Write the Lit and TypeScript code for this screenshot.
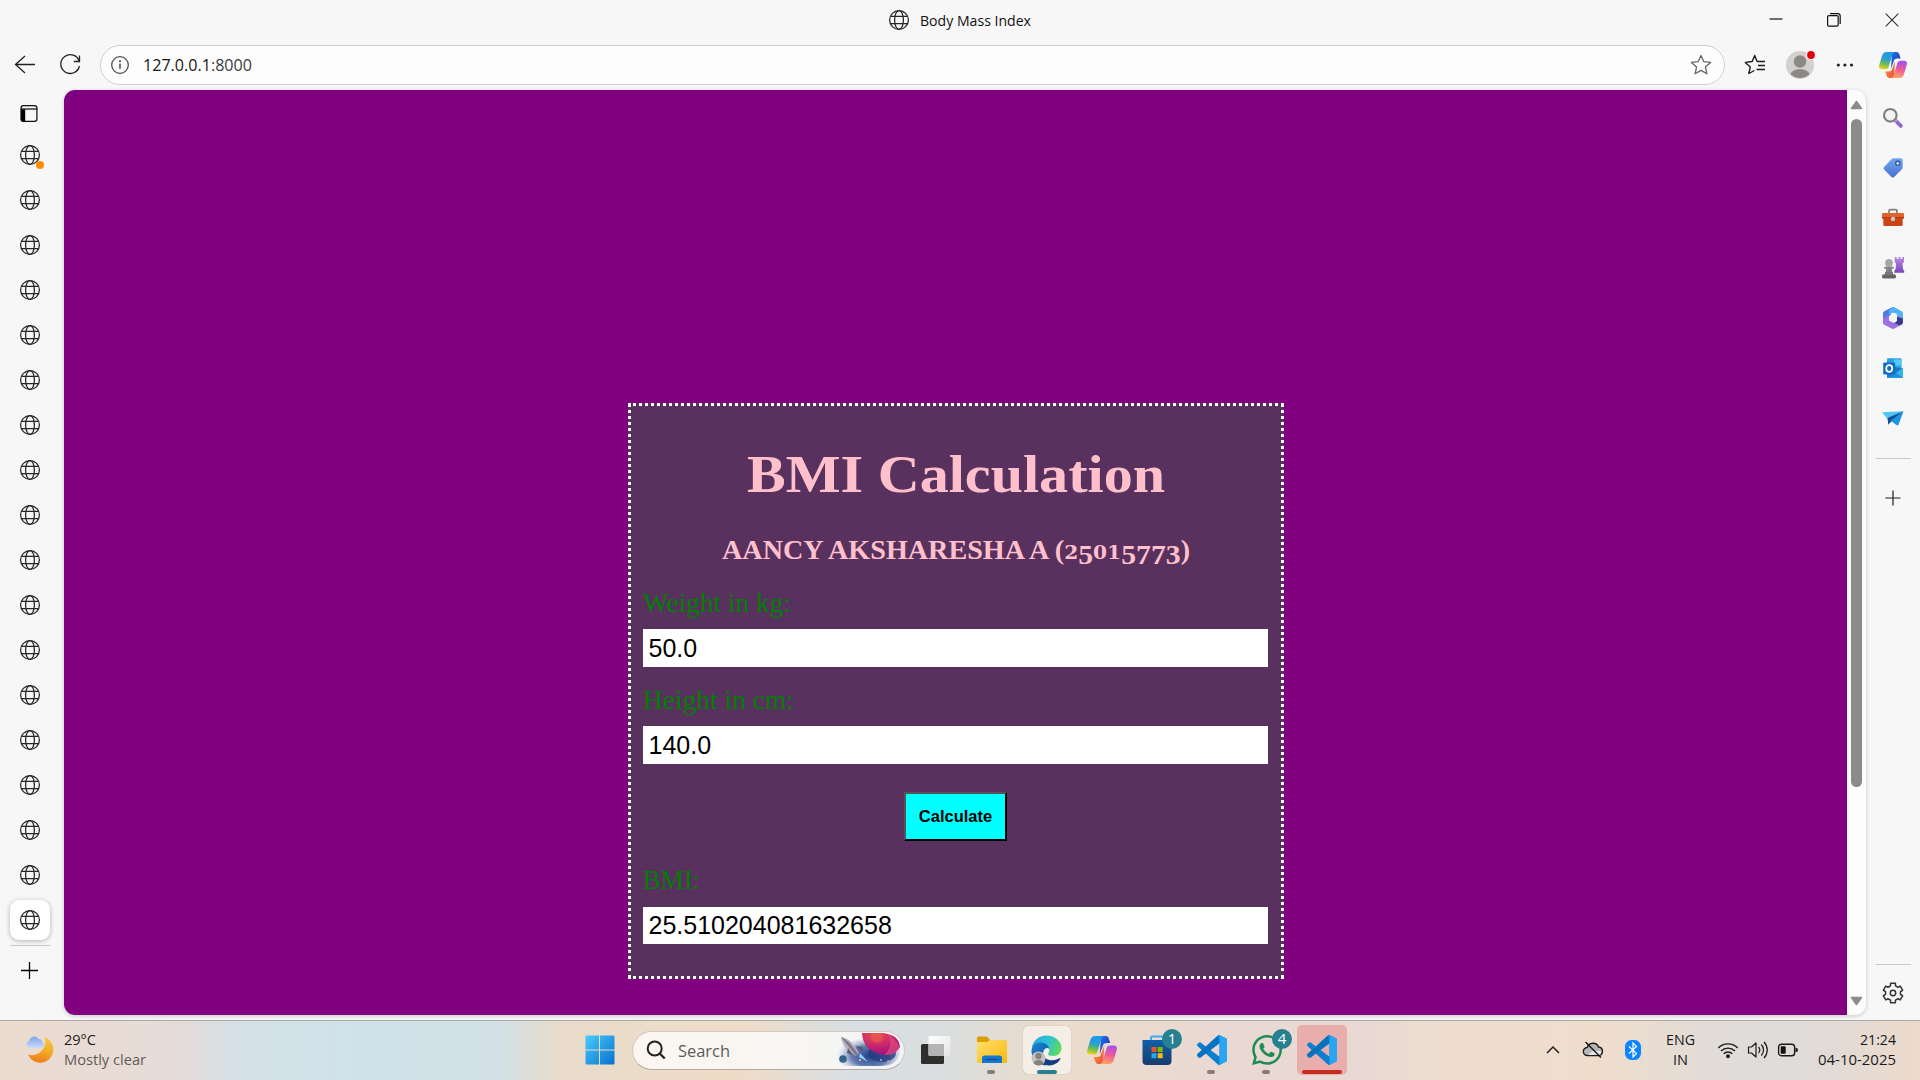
import { LitElement, html, css } from "lit";
import { customElement, property, query } from "lit/decorators.js";

/* Single line of text stretched or squeezed to an exact advance width. */
@customElement("fit-text")
class FitText extends LitElement {
  static styles = css`
    :host { display: inline-block; white-space: pre; flex: none; text-align: left; }
    .inner { display: inline-block; transform-origin: 0 50%; white-space: pre; }
  `;
  @property({ type: Number }) w = 0;
  @query(".inner") inner!: HTMLElement;
  firstUpdated() {
    const natural = this.inner.getBoundingClientRect().width;
    this.style.width = this.w + "px";
    if (natural) this.inner.style.transform = `scaleX(${this.w / natural})`;
  }
  render() {
    return html`<span class="inner"><slot></slot></span>`;
  }
}

const globe = html`<svg class="globe" width="22" height="22" viewBox="0 0 22 22" fill="none" stroke="#262626" stroke-width="1.25">
  <circle cx="11" cy="11" r="9.4"/><ellipse cx="11" cy="11" rx="4.4" ry="9.4"/>
  <path d="M2.4 7.4H19.6M2.4 14.7H19.6"/></svg>`;

const copilot = (w: number, h: number) => html`<svg width=${w} height=${h} viewBox="0 0 28 26">
  <defs>
    <linearGradient id="cpA" x1="0.5" y1="0" x2="0.3" y2="1"><stop offset="0" stop-color="#1a9af0"/><stop offset=".4" stop-color="#2a9fd0"/><stop offset=".7" stop-color="#6cbf55"/><stop offset="1" stop-color="#f5cf1c"/></linearGradient>
    <linearGradient id="cpB" x1="0.6" y1="0" x2="0.4" y2="1"><stop offset="0" stop-color="#a54ff0"/><stop offset=".5" stop-color="#ee5b9c"/><stop offset="1" stop-color="#ffa35a"/></linearGradient>
    <linearGradient id="cpC" x1="0" y1="0" x2="1" y2="1"><stop offset="0" stop-color="#2b6de8"/><stop offset="1" stop-color="#1238a8"/></linearGradient>
    <linearGradient id="cpD" x1="0" y1="0" x2="1" y2="1"><stop offset="0" stop-color="#f6b430"/><stop offset="1" stop-color="#ee3f45"/></linearGradient>
  </defs>
  <path fill="url(#cpC)" d="M13 0h4.6c1.5 0 2.3.9 2.8 2.4l1.3 4.1h-3.4c-2 0-3 .9-3.6 2.7L12 17z"/>
  <path fill="url(#cpD)" d="M15 26h-4.6c-1.5 0-2.3-.9-2.8-2.4l-1.3-4.1h3.4c2 0 3-.9 3.6-2.7L16 9z"/>
  <path fill="url(#cpA)" d="M7.6 0h8.6c-1.7.2-2.4 1.400-2.900 3.100L9.600 15c-.500 1.600-1.700 2.300-3.300 2.300H3c-2.300 0-3.500-1.600-2.800-4L3 4C3.800 1.300 5.200 0 7.600 0z"/>
  <path fill="url(#cpB)" d="M20.4 26h-8.600c1.700-.2 2.400-1.400 2.900-3.100L18.400 11c.500-1.600 1.700-2.300 3.300-2.300H25c2.300 0 3.500 1.600 2.800 4L25 22c-.8 2.700-2.200 4-4.600 4z"/>
</svg>`;

const vscode = html`<svg width="30" height="30" viewBox="0 0 24 24">
  <path fill="#0a7fd0" d="M23.15 2.587L18.21.21a1.494 1.494 0 0 0-1.705.29l-9.46 8.63-4.12-3.128a.999.999 0 0 0-1.276.057L.327 7.261A1 1 0 0 0 .326 8.74L3.899 12 .326 15.26a1 1 0 0 0 .001 1.479L1.65 17.94a.999.999 0 0 0 1.276.057l4.12-3.128 9.46 8.63a1.492 1.492 0 0 0 1.704.29l4.942-2.377A1.5 1.5 0 0 0 24 20.06V3.939a1.5 1.5 0 0 0-.85-1.352zm-5.146 14.861L10.826 12l7.178-5.448v10.896z"/>
  <path fill="#0667ae" d="M1.65 17.94a1 1 0 0 1-1.32-1.2 1 1 0 0 1 0-1.480L16.500.5 18 6.550 2.930 18z" opacity=".55"/>
  <path fill="#28a5f3" d="M18 .13l5.150 2.457A1.500 1.500 0 0 1 24 3.940v16.120a1.500 1.500 0 0 1-.85 1.350L18 23.870z"/>
</svg>`;

const gearPath = (() => {
  const pts: string[] = [];
  for (let i = 0; i < 6; i++) {
    const base = (i * 60 - 90) * (Math.PI / 180);
    for (const [off, r] of [[-14, 10], [14, 10], [19, 7.6], [41, 7.6]] as const) {
      const a = base + (off * Math.PI) / 180;
      pts.push(`${(11 + r * Math.cos(a)).toFixed(2)} ${(11 + r * Math.sin(a)).toFixed(2)}`);
    }
  }
  return "M" + pts.join("L") + "Z";
})();

const railIcons = [
  /* search */
  html`<svg width="22" height="22" viewBox="0 0 22 22"><path d="M13.500 13.500l5.300 5.300" stroke="#9263d0" stroke-width="3.800" stroke-linecap="round"/><path d="M12.500 12.500l2 2" stroke="#b9a3da" stroke-width="2.500"/><circle cx="8.300" cy="8.300" r="6.300" fill="#f2f3f5" stroke="#7f7f7f" stroke-width="2.100"/></svg>`,
  /* tag */
  html`<svg width="22" height="22" viewBox="0 0 22 22"><defs><linearGradient id="tg" x1="0" y1="0" x2="0" y2="1"><stop offset="0" stop-color="#73a9ee"/><stop offset="1" stop-color="#466fd2"/></linearGradient></defs><path fill="url(#tg)" d="M11 1.300h8q1.700 0 1.700 1.700v7.500q0 .8-.6 1.400l-8 8q-1.300 1.200-2.600 0l-7.400-7.400q-1.200-1.300 0-2.600l7.500-8q.6-.6 1.400-.6z"/><circle cx="15.800" cy="6.200" r="2.100" fill="#cfe0fa" stroke="#24458f" stroke-width="1.100"/></svg>`,
  /* toolbox */
  html`<svg width="24" height="22" viewBox="0 0 24 22"><path d="M8 7V4q0-1.300 1.300-1.300h5.400Q16 2.700 16 4v3" fill="none" stroke="#7d7f80" stroke-width="1.700"/><path d="M2.300 9h19.400v8.500q0 1.600-1.600 1.600H3.900q-1.600 0-1.600-1.600z" fill="#cc4415"/><rect x="1" y="6" width="22" height="5.500" rx="1.200" fill="#e2622b"/><rect x="1" y="10" width="22" height="1.500" fill="#b63a10"/><circle cx="12" cy="12" r="2.200" fill="#c9c9c9"/></svg>`,
  /* games */
  html`<svg width="24" height="24" viewBox="0 0 24 24"><defs><linearGradient id="rk" x1="0" y1="0" x2="0" y2="1"><stop offset="0" stop-color="#b98be6"/><stop offset="1" stop-color="#7448bd"/></linearGradient></defs><path fill="url(#rk)" d="M13.700 1h2v2h1.700V1h2.200v2h1.600V1h1.800v5l-1.500 1.300.5 5.700 1.200 2v1.700h-9.900v-1.700l1.300-2 .5-5.700-1.400-1.300z"/><circle cx="8" cy="7" r="3.900" fill="#a8a8a8"/><path d="M3.300 10.800h9.400v1.900h-1.900l.6 4.300H4.600l.6-4.300H3.300z" fill="#848484"/><rect x="1" y="18.300" width="14" height="4.300" rx="1.900" fill="#666"/><rect x="4" y="16" width="8" height="3" fill="#777"/></svg>`,
  /* m365 */
  html`<svg width="22" height="24" viewBox="0 0 22 24"><path fill="#4b7ce8" d="M1 7.500q0-1.500 1.200-2.200L9.500 1.400q1.500-.8 3 0L9 3.500v5L6.800 11v6.500L5 20l-2.800-1.500Q1 17.800 1 16.500z"/><path fill="#53b1f4" d="M9 2.500l1.500-1.200q.8-.4 2 0l7.200 4q1.300.7 1.300 2.200v6l-6-3.500V8L11 6.500 7 9V4z"/><path fill="#3a3b8f" d="M21 12.500v4q0 1.200-1.200 2L17 20l-6-2 4-3v-4.500z"/><path fill="#9d72e0" d="M1 12v4.500q0 1.200 1.200 2l7.300 4.100q1.500.8 3 0l5.500-3.200-7-3-4.200-2V8.500L3 12z"/><circle cx="11" cy="12" r="3.700" fill="#f7f7f7"/></svg>`,
  /* outlook */
  html`<svg width="22" height="22" viewBox="0 0 22 22"><rect x="5" y="1.300" width="14.500" height="12" rx="1" fill="#2aa3e6"/><rect x="12" y="2.500" width="7.500" height="6" fill="#54cbf7"/><path fill="#1379c8" d="M5 9l15.800 2.500v9.200H5z"/><path fill="#33b5ee" d="M21 10.500v10H8z"/><path fill="#1a92da" d="M21 20.700L13 15l-7 5.700z"/><rect x="1.200" y="5.500" width="12" height="12" rx="1.300" fill="#0f6cc4"/><ellipse cx="7.200" cy="11.500" rx="3" ry="3.300" fill="none" stroke="#fff" stroke-width="1.800"/></svg>`,
  /* drop */
  html`<svg width="24" height="22" viewBox="0 0 24 22"><path fill="#4fc4f4" d="M1 5.300l21.500-1.100L7 12.500z"/><path fill="#0e4f94" d="M22.500 4.200L6.500 11l.8 6.800 3.200-3.600z"/><path fill="#1e93e0" d="M22.500 4.200l-5 13.600q-.5.900-1.500.400l-6.500-4.500z"/></svg>`,
];

@customElement("app-root")
class AppRoot extends LitElement {
  static styles = css`
    :host { display: block; width: 1920px; height: 1080px; overflow: hidden; background: #f7f7f7; color: #1b1b1b; font-family: "Open Sans", "Noto Sans", sans-serif; }
    * { box-sizing: border-box; }
    svg { display: block; flex: none; overflow: visible; }
    .window { display: grid; grid-template-rows: 40px 50px 930px 60px; height: 1080px; }

    .titlebar { display: grid; grid-template-columns: 1fr auto 1fr; align-items: center; }
    .tab { grid-column: 2; display: flex; align-items: center; gap: 10px; font-size: 14.600px; color: #111; padding-right: 1px; }
    .controls { justify-self: end; display: flex; gap: 44px; padding-right: 21.500px; }

    .toolbar { display: flex; align-items: flex-start; padding-top: 5px; }
    .nav { display: flex; gap: 24px; width: 100px; padding: 9px 0 0 14px; }
    .address { width: 1625px; height: 40px; border: 1px solid #cfcfcf; border-radius: 20px; background: #fdfdfd; display: flex; align-items: center; padding: 0 12px 0 9px; font-size: 17px; color: #3a3a3a; }
    .address .url { margin: 0 0 2px 13px; }
    .address b { font-weight: 400; color: #151515; }
    .address .star { margin-left: auto; }
    .actions { display: flex; align-items: center; height: 40px; padding-left: 19px; }
    .avatar { margin-left: 19px; }
    .more { margin-left: 20px; }
    .pilot { margin-left: 24px; }

    .main { display: grid; grid-template-columns: 64px 1802px 54px; }
    .tabs { display: flex; flex-direction: column; padding: 13px 0 0 10px; }
    .panel { margin: 0 0 11px 8px; height: 21px; }
    .tabitem { position: relative; width: 40px; height: 40px; margin-bottom: 5px; display: flex; align-items: center; justify-content: center; border-radius: 9px; }
    .tabitem.on { background: #fff; box-shadow: 0 1px 5px rgba(0,0,0,.28); }
    .dot { position: absolute; left: 26px; top: 26px; width: 8px; height: 8px; border-radius: 50%; background: #ff8c00; }
    .rule { height: 1px; background: #c9c9c9; flex: none; }
    .tabs .rule { width: 40px; }
    .plus { margin: 15px 0 0 10px; }

    .view { height: 925px; display: flex; border-radius: 11px; overflow: hidden; background: #fdfdfd; box-shadow: 0 1px 4px rgba(0,0,0,.2); }
    .page { width: 1783px; background: #800080; padding: 313px 0 0 564px; }
    .bar { width: 19px; display: flex; flex-direction: column; align-items: center; padding: 10px 0 9px 0; }
    .thumb { width: 11px; height: 668px; border-radius: 6px; background: #8b8b8b; margin-top: 9px; }
    .bar .down { margin-top: auto; }

    .card { width: 656px; height: 576px; border: 3px dotted #fff; background: #58315f; padding: 38px 13px 0 12px; font-family: "Liberation Serif", serif; color: #008000; font-size: 26.500px; display: flex; flex-direction: column; }
    h1, h2 { margin: 0; color: #ffc0cb; text-align: center; font-weight: 700; white-space: nowrap; }
    h1 { font-size: 53px; line-height: 60px; height: 60px; }
    h2 { font-size: 26.500px; line-height: 30px; height: 30px; margin-top: 31px; }
    .lo { font-family: "DejaVu Serif", serif; font-size: 19px; line-height: 1; }
    .de { font-size: 28px; vertical-align: -5px; line-height: 1; }
    label { display: block; height: 30px; line-height: 30px; flex: none; }
    .l1 { margin-top: 23px; } .l2 { margin-top: 18px; } .l3 { margin-top: 24px; }
    input { display: block; width: 625px; height: 38px; flex: none; margin: 11px 0 0; padding: 0 5.500px; border: 0; background: #fff; color: #000; font: 25px "Liberation Sans", sans-serif; }
    .out { height: 37px; margin-top: 12px; }
    button { width: 103px; height: 49px; flex: none; margin: 28px 0 0 261px; padding: 0; background: #0ff; border: 2px solid; border-color: #555 #000 #000 #555; color: #000; font: 700 16.500px "Liberation Sans", sans-serif; }

    .rail { display: flex; flex-direction: column; align-items: center; padding-top: 3px; }
    .slot { height: 50px; width: 54px; display: flex; align-items: center; justify-content: center; }
    .rail .rule { width: 35px; margin-top: 15px; }
    .railplus { margin-top: 31px; }
    .rail .low { margin-top: auto; }
    .gear { margin: 17px 0 16px; }

    .taskbar { display: flex; align-items: center; position: relative; box-shadow: inset 0 1px #aba9a8; background: linear-gradient(90deg, #ebdbd0 0, #e7dcd7 150px, #e3dcda 190px, #d5e1e7 235px, #cfe2ea 360px, #d2e0e5 500px, #e9dccb 560px, #efdcc7 740px, #d8dfe3 850px, #dadddc 960px, #ecdccb 1060px, #ead9d2 1200px, #e9d8d4 1350px, #eeddcf 1450px, #efddcc 1600px, #e1dcd8 1720px, #dedbd9 1800px, #ecdacb 1920px); }
    .weather { display: flex; align-items: center; width: 584.500px; padding-left: 25px; gap: 10px; }
    .lines { display: flex; flex-direction: column; font-size: 15px; line-height: 20px; padding-bottom: 2px; }
    .muted { color: #5f5b59; }
    .search { width: 273px; height: 39px; margin-left: 17px; border-radius: 20px; border: 1px solid #d2c8bf; border-bottom-color: #b3aaa4; background: linear-gradient(90deg, #fbf6f0, #f8f6f3 60%, #f1f4f6); display: flex; align-items: center; padding: 0 2px 0 13px; font-size: 16.500px; color: #5c5c5c; }
    .search fit-text { margin-left: 12px; }
    .search .art { margin-left: auto; }
    .taskview { margin-left: 16px; }
    .apps { display: flex; margin-left: 13.500px; height: 60px; }
    .app { position: relative; width: 55px; height: 60px; display: flex; align-items: center; justify-content: center; }
    .tile { position: absolute; inset: 6px 3px 6px 4px; border-radius: 5px; background: #f5eee6; box-shadow: 0 0 1px rgba(0,0,0,.3); }
    .alert { inset: 5px 2px 5px 3px; background: #e7aeab; box-shadow: none; }
    .app svg { position: relative; }
    .ind { position: absolute; bottom: 6px; left: 23px; width: 8px; height: 4px; border-radius: 2px; background: #857d79; }
    .ind.wide { left: 18px; width: 20px; background: #27808f; }
    .ind.red { left: 8px; width: 40px; background: #c62b1f; }
    .badge { position: absolute; left: 43px; top: 9px; width: 20px; height: 20px; margin-left: -10px; border-radius: 50%; background: #27808f; color: #fff; font-size: 15px; line-height: 19px; text-align: center; }
    .tray { margin-left: auto; display: flex; align-items: center; padding-right: 24.500px; }
    .cloud { margin-left: 21px; }
    .bt { margin-left: 21px; }
    .wifi { margin-left: 19px; }
    .vol, .bat { margin-left: 8px; }
    .lang { align-items: center; width: 34px; margin-left: 23px; }
    .clock { align-items: flex-end; margin-left: 19px; }
  `;

  render() {
    return html`
      <div class="window">
        <div class="titlebar">
          <div class="tab">${globe}<fit-text w="111">Body Mass Index</fit-text></div>
          <div class="controls">
            <svg width="14" height="14" viewBox="0 0 14 14"><path d="M.5 6h13" stroke="#111" stroke-width="1.200"/></svg>
            <svg width="14" height="14" viewBox="0 0 14 14" fill="none" stroke="#111" stroke-width="1.200"><rect x=".6" y="2.600" width="10.600" height="10.600" rx="1.200"/><path d="M3 .7h7.800q2.400 0 2.400 2.400V11"/></svg>
            <svg width="14" height="14" viewBox="0 0 14 14"><path d="M.7.700l12.600 12.600M13.300.700L.7 13.300" stroke="#333" stroke-width="1.100"/></svg>
          </div>
        </div>

        <div class="toolbar">
          <div class="nav">
            <svg width="22" height="22" viewBox="0 0 22 22" fill="none" stroke="#222" stroke-width="1.300"><path d="M21 10.500H1.500M11 2L1.500 10.500 11 19"/></svg>
            <svg width="22" height="22" viewBox="0 0 22 22" fill="none" stroke="#222" stroke-width="1.300"><path d="M19.300 7.700A9.400 9.400 0 1 0 19.400 12M19.500 1.500v6h-5.700"/></svg>
          </div>
          <div class="address">
            <svg width="20" height="20" viewBox="0 0 20 20" fill="none" stroke="#4d4d4d" stroke-width="1.300"><circle cx="10" cy="10" r="8.300"/><path d="M10 8.800v5" stroke-width="1.600"/><circle cx="10" cy="6.300" r=".5"/></svg>
            <fit-text class="url" w="109"><b>127.0.0.1</b>:8000</fit-text>
            <svg class="star" width="22" height="22" viewBox="0 0 22 22" fill="none" stroke="#666" stroke-width="1.300" stroke-linejoin="round"><path d="M11 1.500l2.700 6.100 6.900.8-5.200 4.500 1.500 6.900L11 16.400 5.100 19.800l1.500-6.900L1.400 8.400l6.900-.8z"/></svg>
          </div>
          <div class="actions">
            <svg width="22" height="22" viewBox="0 0 22 22" fill="none" stroke="#1c1c1c" stroke-width="1.400" stroke-linejoin="round"><path d="M14 7.500L13 7.300 10.700 1.500 8.200 7.500 1.300 8.400l5 4.500L4.800 19.500l5.600-3M13.500 7.500H21M14 11.500h7M12.500 15.500H21"/></svg>
            <svg class="avatar" width="30" height="30" viewBox="0 0 30 30"><defs><clipPath id="av"><circle cx="15" cy="15" r="13"/></clipPath></defs><circle cx="15" cy="15" r="14" fill="#d3d1ce"/><g clip-path="url(#av)" fill="#8b8885"><circle cx="15" cy="11.500" r="6.200"/><ellipse cx="15" cy="26" rx="10" ry="7"/></g><circle cx="26" cy="5" r="5" fill="#f7f7f7"/><circle cx="26" cy="5" r="3.900" fill="#e3000b"/></svg>
            <svg class="more" width="20" height="20" viewBox="0 0 20 20" fill="#222"><circle cx="3.300" cy="10" r="1.600"/><circle cx="9.900" cy="10" r="1.600"/><circle cx="16.500" cy="10" r="1.600"/></svg>
            <div class="pilot">${copilot(28, 26)}</div>
          </div>
        </div>

        <div class="main">
          <div class="tabs">
            <svg class="panel" width="22" height="22" viewBox="0 0 22 22"><rect x="2.700" y="2.700" width="16.600" height="16.600" rx="2.500" fill="none" stroke="#111" stroke-width="1.300"/><path d="M2.500 6.500h4.500v13H4.500q-2 0-2-2z" fill="#000"/><path d="M2.500 6.300h17" stroke="#111" stroke-width="1.300"/></svg>
            ${Array.from({ length: 18 }, (_, i) => html`<div class="tabitem ${i === 17 ? "on" : ""}">${globe}${i === 0 ? html`<i class="dot"></i>` : ""}</div>`)}
            <div class="rule"></div>
            <svg class="plus" width="19" height="19" viewBox="0 0 19 19"><path d="M9.500 1v17M1 9.500h17" stroke="#000" stroke-width="1.300"/></svg>
          </div>

          <div class="view">
            <div class="page">
              <div class="card">
                <h1><fit-text w="418">BMI Calculation</fit-text></h1>
                <h2><fit-text w="468">AANCY AKSHARESHA A (<span class="lo">2</span><span class="de">5</span><span class="lo">01</span><span class="de">5773</span>)</fit-text></h2>
                <label class="l1"><fit-text w="148">Weight in kg:</fit-text></label>
                <input .value=${"50.0"}>
                <label class="l2"><fit-text w="151">Height in cm:</fit-text></label>
                <input .value=${"140.0"}>
                <button>Calculate</button>
                <label class="l3"><fit-text w="57">BMI:</fit-text></label>
                <input class="out" .value=${"25.510204081632658"}>
              </div>
            </div>
            <div class="bar">
              <svg width="13" height="10" viewBox="0 0 13 10"><path d="M6.500 1.500l5 7h-10z" fill="#8b8b8b" stroke="#8b8b8b" stroke-width="1.600" stroke-linejoin="round"/></svg>
              <div class="thumb"></div>
              <svg class="down" width="13" height="10" viewBox="0 0 13 10"><path d="M6.500 8.500l5-7h-10z" fill="#8b8b8b" stroke="#8b8b8b" stroke-width="1.600" stroke-linejoin="round"/></svg>
            </div>
          </div>

          <div class="rail">
            ${railIcons.map((icon) => html`<div class="slot">${icon}</div>`)}
            <div class="rule"></div>
            <svg class="railplus" width="16" height="16" viewBox="0 0 16 16"><path d="M8 .5v15M.5 8h15" stroke="#1c1c1c" stroke-width="1.200"/></svg>
            <div class="rule low"></div>
            <svg class="gear" width="22" height="22" viewBox="0 0 22 22" fill="none" stroke="#333" stroke-width="1.500" stroke-linejoin="round"><path d=${gearPath}/><circle cx="11" cy="11" r="2.700"/></svg>
          </div>
        </div>

        <div class="taskbar">
          <div class="weather">
            <svg width="29" height="29" viewBox="0 0 29 29"><defs><linearGradient id="mn" x1="0.6" y1="0" x2="0.4" y2="1"><stop offset="0" stop-color="#f7c945"/><stop offset=".5" stop-color="#f4ad2a"/><stop offset="1" stop-color="#ee7a18"/></linearGradient><linearGradient id="cl" x1="0" y1="0" x2="0" y2="1"><stop offset="0" stop-color="#7fa5e8"/><stop offset="1" stop-color="#c9ddf8"/></linearGradient></defs><path fill="url(#mn)" d="M19.500 1A13.200 13.200 0 1 1 3 18.500 13.500 13.500 0 0 0 19.500 1z"/><path fill="url(#cl)" d="M4.300 12a4 4 0 0 1 0-7.500 5 5 0 0 1 9-1.700 4 4 0 0 1 4.200 4 2.800 2.800 0 0 1-1.500 5.200z"/></svg>
            <div class="lines"><fit-text w="32">29°C</fit-text><fit-text class="muted" w="82">Mostly clear</fit-text></div>
          </div>
          <svg width="30" height="30" viewBox="0 0 30 30"><defs><linearGradient id="wn" x1="0" y1="0" x2="1" y2="1"><stop offset="0" stop-color="#4ccbfb"/><stop offset="1" stop-color="#0570cf"/></linearGradient></defs><path fill="url(#wn)" d="M1.500.5H14v14H.5v-13q0-1 1-1zM15 .5h13.500q1 0 1 1v13H15zM.5 15.500H14v14H1.500q-1 0-1-1zM15 15.500h14.500v13q0 1-1 1H15z"/></svg>
          <div class="search">
            <svg width="20" height="20" viewBox="0 0 20 20" fill="none" stroke="#222" stroke-width="2"><circle cx="8.700" cy="8.500" r="7"/><path d="M13.700 13.500l5 5" stroke-width="2.400"/></svg>
            <fit-text w="52">Search</fit-text>
            <svg class="art" width="66" height="34" viewBox="0 0 66 34"><defs>
                <radialGradient id="sp"><stop offset="0" stop-color="#1f3f87"/><stop offset=".55" stop-color="#4a66a4" stop-opacity=".85"/><stop offset="1" stop-color="#b7c4dd" stop-opacity="0"/></radialGradient>
                <radialGradient id="pl" cx=".35" cy=".1" r=".9"><stop offset="0" stop-color="#e2524d"/><stop offset=".45" stop-color="#d02a6b"/><stop offset="1" stop-color="#98127c"/></radialGradient>
                <clipPath id="ar"><path d="M0 0h47q18 2 17 17t-17 16H5q-6-5-4-14z"/></clipPath></defs>
              <g clip-path="url(#ar)"><ellipse cx="34" cy="23" rx="34" ry="19" fill="url(#sp)"/><ellipse cx="46" cy="20" rx="14" ry="9" fill="#253a80" opacity=".75"/>
                <path d="M26 0h34q6 6 5 13-7 10-18 9Q27 18 26 0z" fill="url(#pl)"/><path d="M48 22q12 1 16-8-3-6-12-13 6 12-4 21z" fill="#e9557c" opacity=".6"/><circle cx="41" cy="4" r="6" fill="#ef6146" opacity=".5"/></g>
              <path d="M5 4q7 1 12 7l6 9-3 3-9-6Q6 11 5 4z" fill="#b9b4c2"/><path d="M5 4q8 3 17 17l-2 2z" fill="#7d7789"/><path d="M12 15l-1 5 6 2zM19 13l7 1 1 5z" fill="#5b566b"/><path d="M24 20l8 9-9-5z" fill="#8fd2f5"/><circle cx="7" cy="26" r="3.800" fill="#336487"/><circle cx="24" cy="27" r="1" fill="#e9c8a0"/><circle cx="45" cy="27" r=".8" fill="#fff"/><circle cx="52" cy="28" r=".8" fill="#e9b0c0"/></svg>
          </div>
          <svg class="taskview" width="30" height="30" viewBox="0 0 30 30"><defs><linearGradient id="tv" x1="0" y1="0" x2="1" y2="1"><stop offset="0" stop-color="#fff"/><stop offset="1" stop-color="#e4e4e4"/></linearGradient></defs><rect x="0" y="9" width="23" height="20" rx="1.500" fill="#2f2f2d"/><rect x="7.500" y="1" width="22" height="20" rx="1.500" fill="url(#tv)"/><path d="M7.500 9H23v12H9q-1.500 0-1.500-1.500z" fill="#b4b4b4"/></svg>
          <div class="apps">
            <div class="app"><svg width="30" height="28" viewBox="0 0 30 28"><defs><linearGradient id="fo" x1="0" y1="0" x2="1" y2="1"><stop offset="0" stop-color="#ffdf6c"/><stop offset="1" stop-color="#f9b90c"/></linearGradient></defs><path fill="#dd9e05" d="M0 6V2Q0 .5 1.500.500h8q1 0 2 1.500l1.500 2H28q1.500 0 1.500 1.500V10H0z"/><path fill="url(#fo)" d="M0 6h10l3-2h15.500Q30 4 30 5.500V27H0z"/><path fill="#1477cf" d="M5 27v-5q0-2.500 2.500-2.500h15q2.500 0 2.500 2.500v5z"/><path d="M9 23.500h12" stroke="#0c4f92" stroke-width="1.400" stroke-linecap="round"/></svg><i class="ind"></i></div>
            <div class="app"><div class="tile"></div><svg width="31" height="31" viewBox="0 0 31 31"><defs><linearGradient id="e1" x1="0" y1=".3" x2="1" y2=".6"><stop offset="0" stop-color="#2aa5e6"/><stop offset=".5" stop-color="#2fc3d0"/><stop offset="1" stop-color="#62dc55"/></linearGradient><linearGradient id="e2" x1="0" y1="0" x2=".6" y2="1"><stop offset="0" stop-color="#1a85d6"/><stop offset="1" stop-color="#0f4fa0"/></linearGradient></defs>
                <path fill="url(#e1)" d="M.7 13C2 5.500 8 .5 15.500.5 24 .5 30.500 6.500 30.500 13c0 5-3.700 8-8.200 8-3.300 0-5.300-1-5.300-2 0-.8 1.300-1.500 1.300-3.800 0-3.500-3.300-6-7.300-6C6 9.200 2.500 11 .7 13z"/>
                <path fill="url(#e2)" d="M.5 15.500C1 10 5.500 7 10.500 7.500c4.500.3 7.500 3.500 7.800 6.500-1.500-2-5.800-1-6.300 4C11.500 24 16.500 28 22 27.200 19 30 15 30.800 12 30 5 28.300.3 22 .5 15.500z"/>
                <path fill="#123f84" d="M12 18c0 5 5 7.500 9.500 7.300 3 0 5.500-1.300 7.200-2 .7-.2 1 .2.7.8-2 3.800-6.500 6.600-11.500 6.400C13 30 10.500 24 12 18z"/>
                <circle cx="7.500" cy="23.500" r="7" fill="#c5c3c1"/><circle cx="7.500" cy="21" r="3.200" fill="#85817f"/><path d="M2.700 28.500q0-3.500 4.800-3.500t4.800 3.500q-4.800 4-9.600 0z" fill="#85817f"/></svg><i class="ind wide"></i></div>
            <div class="app">${copilot(30, 28)}</div>
            <div class="app"><svg width="30" height="30" viewBox="0 0 30 30"><defs><linearGradient id="st" x1="0" y1="0" x2="0" y2="1"><stop offset="0" stop-color="#0f5fa8"/><stop offset="1" stop-color="#173c70"/></linearGradient></defs><path d="M9 5V3q0-1.500 1.500-1.500h9Q21 1.500 21 3v2" fill="none" stroke="#32b1ec" stroke-width="2"/><path fill="url(#st)" d="M.5 5h29v21q0 4-4 4h-21q-4 0-4-4z"/><path fill="#f25022" d="M9.500 12h5v5h-5z"/><path fill="#7fba00" d="M15.700 12h5v5h-5z"/><path fill="#1fa8f0" d="M9.500 18.200h5v5h-5z"/><path fill="#ffb900" d="M15.700 18.200h5v5h-5z"/></svg><span class="badge">1</span></div>
            <div class="app">${vscode}<i class="ind"></i></div>
            <div class="app"><svg width="30" height="30" viewBox="0 0 24 24"><path fill="#1e8c54" d="M17.472 14.382c-.297-.149-1.758-.867-2.030-.967-.273-.099-.471-.148-.670.150-.197.297-.767.966-.940 1.164-.173.199-.347.223-.644.075-.297-.150-1.255-.463-2.390-1.475-.883-.788-1.480-1.761-1.653-2.059-.173-.297-.018-.458.130-.606.134-.133.298-.347.446-.520.149-.174.198-.298.298-.497.099-.198.050-.371-.025-.520-.075-.149-.669-1.612-.916-2.207-.242-.579-.487-.500-.669-.510-.173-.008-.371-.010-.570-.010-.198 0-.520.074-.792.372-.272.297-1.040 1.016-1.040 2.479 0 1.462 1.065 2.875 1.213 3.074.149.198 2.096 3.200 5.077 4.487.709.306 1.262.489 1.694.625.712.227 1.360.195 1.871.118.571-.085 1.758-.719 2.006-1.413.248-.694.248-1.289.173-1.413-.074-.124-.272-.198-.570-.347m-5.421 7.403h-.004a9.870 9.870 0 0 1-5.031-1.378l-.361-.214-3.741.982.998-3.648-.235-.374a9.860 9.860 0 0 1-1.510-5.260c.001-5.450 4.436-9.884 9.888-9.884 2.640 0 5.122 1.030 6.988 2.898a9.825 9.825 0 0 1 2.893 6.994c-.003 5.450-4.437 9.884-9.885 9.884m8.413-18.297A11.815 11.815 0 0 0 12.050 0C5.495 0 .160 5.335.157 11.892c0 2.096.547 4.142 1.588 5.945L.057 24l6.305-1.654a11.882 11.882 0 0 0 5.683 1.448h.005c6.554 0 11.890-5.335 11.893-11.893a11.821 11.821 0 0 0-3.480-8.413Z"/></svg><i class="ind"></i><span class="badge">4</span></div>
            <div class="app"><div class="tile alert"></div>${vscode}<i class="ind red"></i></div>
          </div>
          <div class="tray">
            <svg width="16" height="10" viewBox="0 0 16 10"><path d="M2 8l6-6 6 6" fill="none" stroke="#222" stroke-width="1.500"/></svg>
            <svg class="cloud" width="22" height="18" viewBox="0 0 22 18"><path d="M5.500 14.500a4 4 0 0 1-.3-8A6 6 0 0 1 16.500 6a4.300 4.300 0 0 1 .5 8.500z" fill="#b9b7b6" stroke="#1b1b1b" stroke-width="1.400"/><path d="M6 14l5-4h8q1 3-2 4z" fill="#ecebea"/><path d="M3.500 1l15.500 15.500" stroke="#1b1b1b" stroke-width="1.500"/></svg>
            <svg class="bt" width="16" height="20" viewBox="0 0 16 20"><rect width="16" height="20" rx="6.500" fill="#0a84ff"/><path d="M4 6.500l7.500 7L8 17V3l3.500 3.500-7.500 7" fill="none" stroke="#fff" stroke-width="1.200"/></svg>
            <div class="lines lang"><fit-text w="29">ENG</fit-text><fit-text w="15">IN</fit-text></div>
            <svg class="wifi" width="22" height="18" viewBox="0 0 22 18" fill="none" stroke="#1b1b1b" stroke-width="1.300"><path d="M1.300 7a13.700 13.700 0 0 1 19.400 0M4 10a10 10 0 0 1 14 0M6.700 12.800a6 6 0 0 1 8.600 0"/><circle cx="11" cy="15.300" r="1.300" fill="#1b1b1b"/></svg>
            <svg class="vol" width="22" height="20" viewBox="0 0 22 20" fill="none" stroke="#1b1b1b" stroke-width="1.200" stroke-linejoin="round"><path d="M1.500 7h3L9 3v14l-4.500-4h-3z"/><path d="M11.500 7a4.500 4.500 0 0 1 0 6M14.300 4.500a8 8 0 0 1 0 11M17 2a11.500 11.500 0 0 1 0 16"/></svg>
            <svg class="bat" width="22" height="14" viewBox="0 0 22 14"><rect x="1.600" y="1.200" width="16" height="11.500" rx="2.800" fill="none" stroke="#1b1b1b" stroke-width="1.400"/><rect x="3.700" y="3.200" width="5" height="7.500" rx="1" fill="#111"/><path d="M18.500 4.700q2.500 0 2.500 2.300t-2.500 2.300z" fill="#1b1b1b"/></svg>
            <div class="lines clock"><fit-text w="36">21:24</fit-text><fit-text w="78">04-10-2025</fit-text></div>
          </div>
        </div>
      </div>
    `;
  }
}
